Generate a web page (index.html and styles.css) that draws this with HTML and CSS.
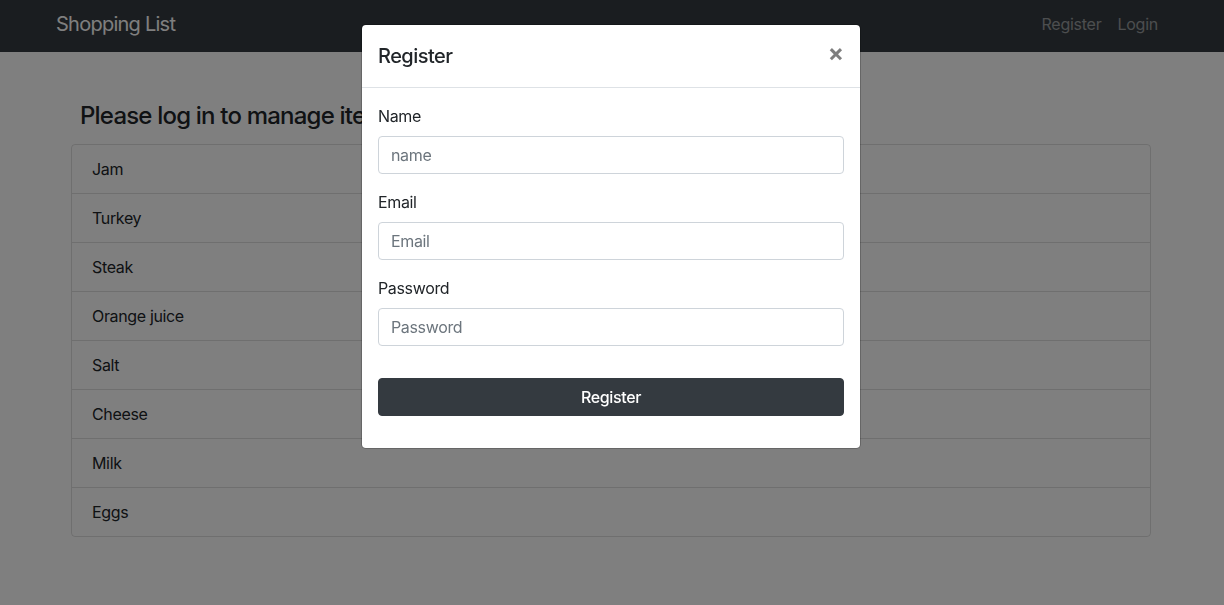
FILE: index.html
```html
<!DOCTYPE html>
<html lang="en">
<head>
<meta charset="utf-8">
<title>Shopping List</title>
<link rel="stylesheet" href="styles.css">
</head>
<body>
<nav class="navbar">
  <div class="container nav-inner">
    <a class="brand" href="#">Shopping List</a>
    <ul class="nav-links">
      <li><a class="nav-link" href="#">Register</a></li>
      <li><a class="nav-link" href="#">Login</a></li>
    </ul>
  </div>
</nav>
<main class="container">
  <div class="inner">
    <h4 class="title">Please log in to manage items</h4>
    <ul class="list-group">
      <li class="list-item">Jam</li>
      <li class="list-item">Turkey</li>
      <li class="list-item">Steak</li>
      <li class="list-item">Orange juice</li>
      <li class="list-item">Salt</li>
      <li class="list-item">Cheese</li>
      <li class="list-item">Milk</li>
      <li class="list-item">Eggs</li>
    </ul>
  </div>
</main>
<div class="backdrop"></div>
<div class="modal">
  <div class="modal-content">
    <div class="modal-header">
      <h5 class="modal-title">Register</h5>
      <button class="close" type="button" aria-label="Close">&times;</button>
    </div>
    <div class="modal-body">
      <form>
        <div class="form-group">
          <label class="label" for="name">Name</label>
          <input class="input" id="name" type="text" placeholder="name">
        </div>
        <div class="form-group">
          <label class="label" for="email">Email</label>
          <input class="input" id="email" type="email" placeholder="Email">
        </div>
        <div class="form-group">
          <label class="label" for="password">Password</label>
          <input class="input" id="password" type="password" placeholder="Password">
        </div>
        <div class="form-group submit-group">
          <button class="btn" type="button">Register</button>
        </div>
      </form>
    </div>
  </div>
</div>
</body>
</html>
```

FILE: styles.css
```css
* { box-sizing: border-box; }
html, body { margin: 0; padding: 0; }
body {
  font-family: Inter, Roboto, "Liberation Sans", sans-serif;
  font-size: 16px;
  line-height: 1.5;
  color: #212529;
  background: #fff;
  height: 605px;
  overflow: hidden;
}
.container {
  max-width: 1140px;
  margin: 0 auto;
  padding: 0 16px 0 14px;
}
.navbar {
  background: #343a40;
  height: 52px;
}
.nav-inner {
  display: flex;
  align-items: center;
  justify-content: space-between;
  height: 52px;
  padding-bottom: 4px;
}
.brand {
  font-size: 20px;
  color: #fff;
  text-decoration: none;
  letter-spacing: -0.75px;
}
.nav-links {
  list-style: none;
  display: flex;
  margin: 0;
  padding: 0;
}
.nav-link {
  display: block;
  padding: 8px;
  color: rgba(255,255,255,.5);
  text-decoration: none;
  letter-spacing: -0.25px;
}
.inner {
  padding: 0 15px;
  margin-top: 50px;
}
.title {
  font-size: 24px;
  font-weight: 500;
  line-height: 1.2;
  margin: 0 0 13px 9px;
  letter-spacing: -0.8px;
}
.list-group {
  list-style: none;
  margin: 0;
  padding: 0;
  border: 1px solid rgba(0,0,0,.125);
  border-radius: 4px;
}
.list-item {
  padding: 12px 20px;
  border-top: 1px solid rgba(0,0,0,.125);
  letter-spacing: -0.35px;
}
.list-item:first-child { border-top: 0; }
.backdrop {
  position: fixed;
  inset: 0;
  background: rgba(0,0,0,.5);
}
.modal {
  position: fixed;
  top: 24px;
  left: 361px;
  width: 500px;
}
.modal-content {
  background: #fff;
  border: 1px solid rgba(0,0,0,.2);
  border-radius: 4.8px;
  background-clip: padding-box;
}
.modal-header {
  display: flex;
  align-items: flex-start;
  justify-content: space-between;
  padding: 16px;
  border-bottom: 1px solid #dee2e6;
}
.modal-title {
  margin: 0;
  font-size: 20px;
  font-weight: 500;
  line-height: 1.5;
  letter-spacing: -0.55px;
}
.close {
  background: transparent;
  border: 0;
  padding: 16px;
  margin: -16px -16px -16px auto;
  font-family: inherit;
  font-size: 24px;
  font-weight: 700;
  line-height: 1;
  color: #000;
  opacity: .5;
  text-shadow: 0 1px 0 #fff;
  cursor: pointer;
}
.modal-body { padding: 16px; }
form { margin: 0; }
.form-group { margin-bottom: 16px; }
.submit-group { margin-top: 32px; }
.label {
  display: inline-block;
  margin-bottom: 8px;
  letter-spacing: -0.35px;
}
.input {
  display: block;
  width: 100%;
  height: 38px;
  padding: 6px 12px;
  font-family: inherit;
  font-size: 16px;
  line-height: 1.5;
  color: #495057;
  background: #fff;
  border: 1px solid #ced4da;
  border-radius: 4px;
  letter-spacing: -0.35px;
}
.input::placeholder { color: #6c757d; opacity: 1; }
.btn {
  display: block;
  width: 100%;
  padding: 6px 12px;
  font-family: inherit;
  font-size: 16px;
  font-weight: 500;
  line-height: 1.5;
  color: #fff;
  background: #343a40;
  border: 1px solid #343a40;
  border-radius: 4px;
  letter-spacing: -0.35px;
}
```
